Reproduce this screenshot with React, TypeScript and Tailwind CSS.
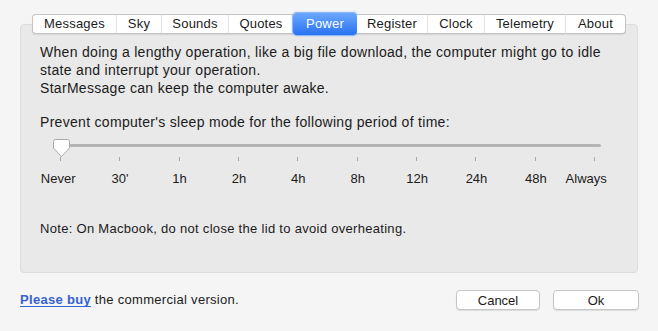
import React from 'react';

const tabs = [
  { label: 'Messages', w: 'w-[84px]' },
  { label: 'Sky', w: 'w-[45px]' },
  { label: 'Sounds', w: 'w-[67px]' },
  { label: 'Quotes', w: 'w-[65px]' },
  { label: 'Power', w: 'w-[64px]', active: true },
  { label: 'Register', w: 'w-[70px]' },
  { label: 'Clock', w: 'w-[57px]' },
  { label: 'Telemetry', w: 'w-[81px]' },
  { label: 'About', w: 'w-[61px]' },
];

const marks = ['Never', "30'", '1h', '2h', '4h', '8h', '12h', '24h', '48h', 'Always'];

function Thumb() {
  return (
    <svg width="19" height="20" viewBox="0 0 19 20" className="block">
      <path
        d="M3.5 1.5 H15.5 Q17.5 1.5 17.5 3.5 V10 L9.5 18.5 L1.5 10 V3.5 Q1.5 1.5 3.5 1.5 Z"
        fill="#ffffff"
        stroke="#a9a9a9"
        strokeWidth="1"
      />
    </svg>
  );
}

export default function App() {
  return (
    <div className="w-[658px] h-[331px] bg-[#f5f5f5] text-[13px] text-[#1b1b1b] font-['Liberation_Sans',Arial,sans-serif] overflow-hidden">
      <div className="pt-[14px] px-[20px]">
        {/* Tab bar */}
        <div className="relative z-10 flex items-center h-[20px] ml-[12px] tracking-[0.2px]">
          {tabs.map((t, i) =>
            t.active ? (
              <div
                key={t.label}
                className={`${t.w} h-[22px] flex items-center justify-center rounded-[4px] text-white bg-gradient-to-b from-[#6ba7fc] to-[#2871f2] shadow-[0_0_0_1px_#8db8f7,0_0_2px_1px_rgba(110,165,250,0.5)]`}
              >
                {t.label}
              </div>
            ) : (
              <div
                key={t.label}
                className={`${t.w} h-[20px] flex items-center justify-center bg-white border-y border-[#c4c4c4] shadow-[0_1px_1px_rgba(0,0,0,0.08)] ${
                  i === 0 ? 'border-l rounded-l-[4px]' : ''
                } ${i === tabs.length - 1 ? 'border-r rounded-r-[4px]' : ''} ${
                  i > 0 && !tabs[i - 1].active ? 'border-l-[1px] border-l-[#e2e2e2]' : ''
                }`}
              >
                {t.label}
              </div>
            )
          )}
        </div>

        {/* Panel */}
        <div className="-mt-[10px] h-[249px] rounded-[4px] bg-[#e9e9e9] border border-[#dddddd] pt-[18px] px-[19px] leading-[18px]">
          <p className="text-[14px] tracking-[0.3px]">
            When doing a lengthy operation, like a big file download, the computer might go to idle
            <br />
            state and interrupt your operation.
            <br />
            StarMessage can keep the computer awake.
          </p>
          <p className="mt-[16px] text-[14px] tracking-[0.3px]">
            Prevent computer's sleep mode for the following period of time:
          </p>

          {/* Slider */}
          <div className="mt-[7px] relative h-[20px] ml-[12px] w-[549px]">
            <div className="absolute left-[8px] right-0 top-[6px] h-[3px] rounded-full bg-[#b4b4b4]" />
            <div className="absolute left-0 top-0">
              <Thumb />
            </div>
          </div>
          <div className="flex justify-between ml-[20px] w-[535px] h-[4px] mt-[-1px]">
            {marks.map((m) => (
              <div key={m} className="w-px h-[4px] bg-[#a8a8a8]" />
            ))}
          </div>
          <div className="grid grid-cols-10 ml-[-9px] w-[594px] mt-[9px]">
            {marks.map((m, i) => (
              <div
                key={m}
                className={`text-center ${i === 0 ? 'pr-[5px]' : ''} ${i === marks.length - 1 ? 'pr-[21px]' : ''}`}
              >
                {m}
              </div>
            ))}
          </div>

          <p className="mt-[32px] tracking-[0.3px]">Note: On Macbook, do not close the lid to avoid overheating.</p>
        </div>

        {/* Footer */}
        <div className="flex items-center justify-between mt-[17px]">
          <div className="tracking-[0.3px]">
            <a href="#" className="font-bold text-[#3362d3] underline underline-offset-2">
              Please buy
            </a>{' '}
            the commercial version.
          </div>
          <div className="flex gap-[13px] mr-[-1px]">
            <button className="w-[84px] h-[20px] rounded-[4px] bg-white border border-[#c6c6c6] shadow-[0_1px_1px_rgba(0,0,0,0.1)] leading-none">
              Cancel
            </button>
            <button className="w-[86px] h-[20px] rounded-[4px] bg-white border border-[#c6c6c6] shadow-[0_1px_1px_rgba(0,0,0,0.1)] leading-none">
              Ok
            </button>
          </div>
        </div>
      </div>
    </div>
  );
}
